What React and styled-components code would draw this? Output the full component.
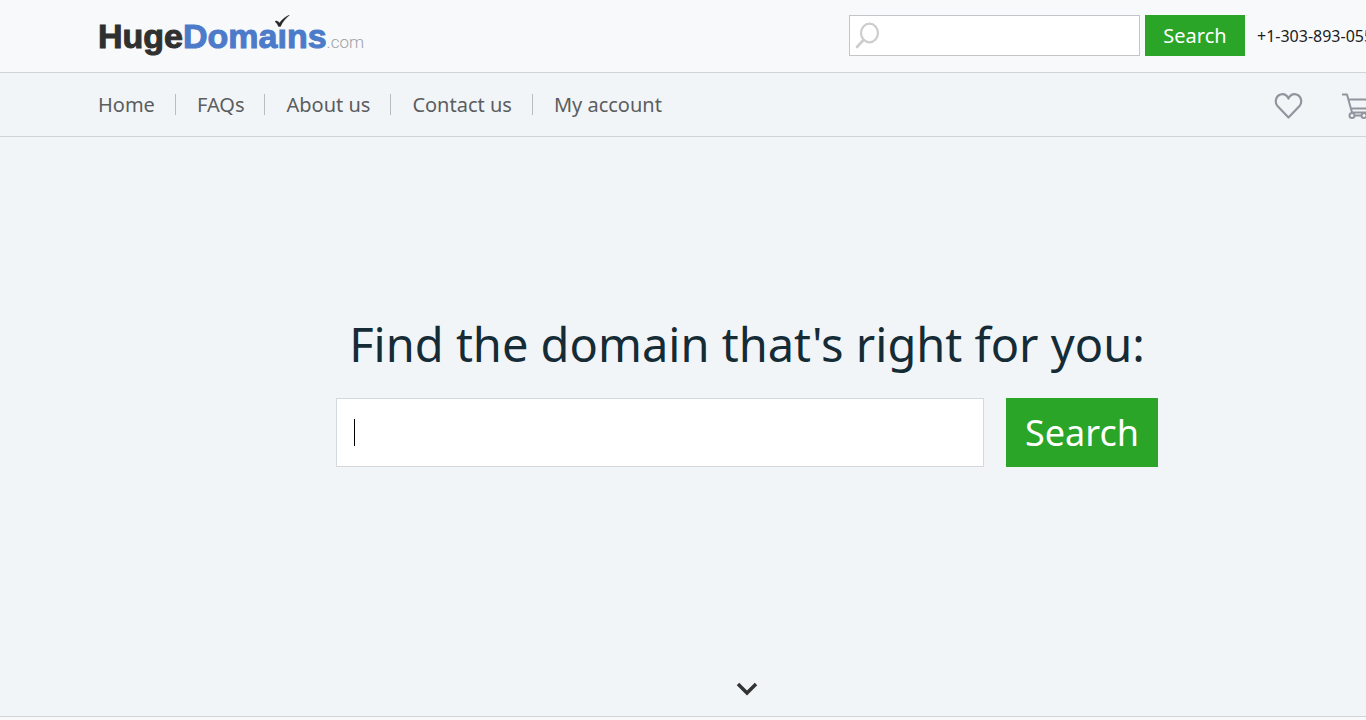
import React from "react";
import styled, { createGlobalStyle } from "styled-components";

const GlobalStyle = createGlobalStyle`
  *, *::before, *::after { box-sizing: border-box; }
  body {
    margin: 0;
    overflow-x: hidden;
    background: #f2f5f8;
    font-family: "Noto Sans", "Open Sans", sans-serif;
  }
  button, input { font: inherit; }
`;

const Page = styled.div`
  min-width: 1494px;
`;

const Bar = styled.div`
  display: flex;
  align-items: center;
  justify-content: space-between;
  height: ${(p) => p.$height}px;
  padding: 0 98px 1px;
  background: ${(p) => p.$background};
  border-bottom: 1px solid #d0d4d8;
`;

const Logo = styled.a`
  position: relative;
  display: flex;
  align-items: baseline;
  color: #2f3030;
  font: bold 34px/42px "Liberation Sans", Arial, sans-serif;
  -webkit-text-stroke: 1px currentColor;
  text-decoration: none;
`;

const LogoAccent = styled.span`
  color: #4c7bc9;
`;

const LogoSuffix = styled.span`
  color: #9fa1a3;
  font: 300 17px/20px Roboto, sans-serif;
  -webkit-text-stroke: 0;
`;

const LogoIcon = styled.span`
  position: relative;
`;

const Check = styled.svg`
  position: absolute;
  left: -3px;
  top: -2px;
  width: 16px;
  height: 12px;
`;

const HeaderTools = styled.div`
  display: flex;
  align-items: center;
  width: 547px;
`;

const SearchForm = styled.form`
  display: flex;
  gap: ${(p) => (p.$large ? 22 : 5)}px;
`;

const Field = styled.div`
  position: relative;
  display: flex;
  width: ${(p) => (p.$large ? 648 : 291)}px;
`;

const TextInput = styled.input`
  width: 100%;
  height: ${(p) => (p.$large ? 69 : 41)}px;
  padding: ${(p) => (p.$large ? "0 17px" : "0 10px 0 38px")};
  background: #fff;
  border: 1px solid ${(p) => (p.$large ? "#d2d8dc" : "#c3c6c8")};
  border-radius: 0;
  font-size: ${(p) => (p.$large ? 24 : 16)}px;
  outline: none;
  caret-color: ${(p) => (p.$large ? "transparent" : "auto")};
`;

const Caret = styled.span`
  position: absolute;
  left: 18px;
  top: 21px;
  width: 1px;
  height: 27px;
  background: #000;
`;

const Magnifier = styled.svg`
  position: absolute;
  left: 6px;
  top: 7px;
  width: 26px;
  height: 28px;
`;

const SubmitButton = styled.button`
  width: ${(p) => (p.$large ? 152 : 100)}px;
  height: ${(p) => (p.$large ? 69 : 41)}px;
  padding: 0;
  border: 0;
  background: #2aa527;
  color: #fff;
  font-size: ${(p) => (p.$large ? 36 : 20)}px;
  line-height: 40px;
  cursor: pointer;
`;

const Phone = styled.a`
  margin-left: 12px;
  color: #1c1c1c;
  font-size: 16px;
  white-space: nowrap;
  text-decoration: none;
`;

const NavList = styled.ul`
  display: flex;
  margin: 0;
  padding: 0;
  list-style: none;
`;

const NavItem = styled.li`
  display: flex;
  align-items: center;

  &:not(:last-child)::after {
    content: "";
    width: 1px;
    height: 21px;
    margin: 0 21px 0 20px;
    background: #b9bdc0;
  }
`;

const NavLink = styled.a`
  color: #5b5d5f;
  font-size: 20px;
  line-height: 29px;
  text-decoration: none;
`;

const IconLinks = styled.div`
  display: flex;
  align-items: center;
  gap: 38px;
  width: 122px;
`;

const IconLink = styled.a`
  display: flex;
  color: #90959e;
`;

const Hero = styled.main`
  display: flex;
  flex-direction: column;
  align-items: center;
  height: 580px;
  padding: 171px 98px 19px;
  border-bottom: 1px solid #d0d4d8;
`;

const Title = styled.h1`
  margin: 0 0 18px;
  color: #152b35;
  font-size: 47px;
  font-weight: 400;
  line-height: 72px;
`;

const ScrollLink = styled.a`
  display: flex;
  margin-top: auto;
  color: #333;
`;

const Below = styled.section`
  height: 3px;
  background: #f8f9fb;
`;

const links = ["Home", "FAQs", "About us", "Contact us", "My account"];

export default function App() {
  const stop = (e) => e.preventDefault();
  return (
    <>
      <GlobalStyle />
      <Page>
        <Bar as="header" $height={73} $background="#f8f9fb">
          <Logo href="#home" aria-label="HugeDomains.com">
            <span>Huge</span>
            <LogoAccent>
              Doma
              <LogoIcon>
                ı
                <Check viewBox="0 0 16 12" aria-hidden="true">
                  <path d="M1 6.500 C3 5.500 4 6.500 5.500 8 C8 4.500 11 2 15.500 0 C11 4 8.500 7 6.500 11.500 H4.500 C3.500 9.500 3 8 1 6.500Z" fill="#262626" stroke="#262626" strokeWidth="0.4" />
                </Check>
              </LogoIcon>
              ns
            </LogoAccent>
            <LogoSuffix>.com</LogoSuffix>
          </Logo>
          <HeaderTools>
            <SearchForm onSubmit={stop}>
              <Field>
                <TextInput type="text" aria-label="Search domains" />
                <Magnifier viewBox="0 0 26 28" fill="none" stroke="#cdcdcd" strokeWidth="2.2" aria-hidden="true">
                  <ellipse cx="14.500" cy="11" rx="8.500" ry="9.300" />
                  <path d="M8.500 18 L2 25" strokeWidth="2.600" strokeLinecap="round" />
                </Magnifier>
              </Field>
              <SubmitButton type="submit">Search</SubmitButton>
            </SearchForm>
            <Phone href="tel:+13038930552">+1-303-893-0552</Phone>
          </HeaderTools>
        </Bar>
        <Bar as="nav" $height={64} $background="#f2f5f8">
          <NavList>
            {links.map((label) => (
              <NavItem key={label}>
                <NavLink href="#">{label}</NavLink>
              </NavItem>
            ))}
          </NavList>
          <IconLinks>
            <IconLink href="#favorites" aria-label="Favorites">
              <svg width="30" height="30" viewBox="0 -3 30 30" fill="none" stroke="currentColor" strokeWidth="2.2" strokeLinejoin="round">
                <path d="M14.500 25.500 L3.500 14 C0.500 10.500 1.500 4 6.500 2.500 C10.500 1.500 13 3.500 14.500 6.500 C16 3.500 18.500 1.500 22.500 2.500 C27.500 4 28.500 10.500 25.500 14 Z" />
              </svg>
            </IconLink>
            <IconLink href="#cart" aria-label="Cart">
              <svg width="34" height="30" viewBox="0 -3 34 30" fill="none" stroke="currentColor" strokeWidth="2" strokeLinejoin="round">
                <path d="M0 2.500 H5 L10 20.500 H29 M6.500 7.500 H31 L28 16.500 H9" />
                <circle cx="10" cy="23.500" r="2.500" />
                <circle cx="22" cy="23.500" r="2.500" />
                <path d="M12.500 23.500 H19.500" />
              </svg>
            </IconLink>
          </IconLinks>
        </Bar>
        <Hero>
          <Title>Find the domain that's right for you:</Title>
          <SearchForm $large onSubmit={stop}>
            <Field $large>
              <TextInput $large type="text" aria-label="Domain name" autoFocus />
              <Caret aria-hidden="true" />
            </Field>
            <SubmitButton $large type="submit">Search</SubmitButton>
          </SearchForm>
          <ScrollLink href="#more" aria-label="Scroll down">
            <svg width="22" height="16" viewBox="0 0 22 16" fill="none" stroke="currentColor" strokeWidth="3.500">
              <path d="M2 3 L11 12 L20 3" />
            </svg>
          </ScrollLink>
        </Hero>
        <Below id="more" />
      </Page>
    </>
  );
}
